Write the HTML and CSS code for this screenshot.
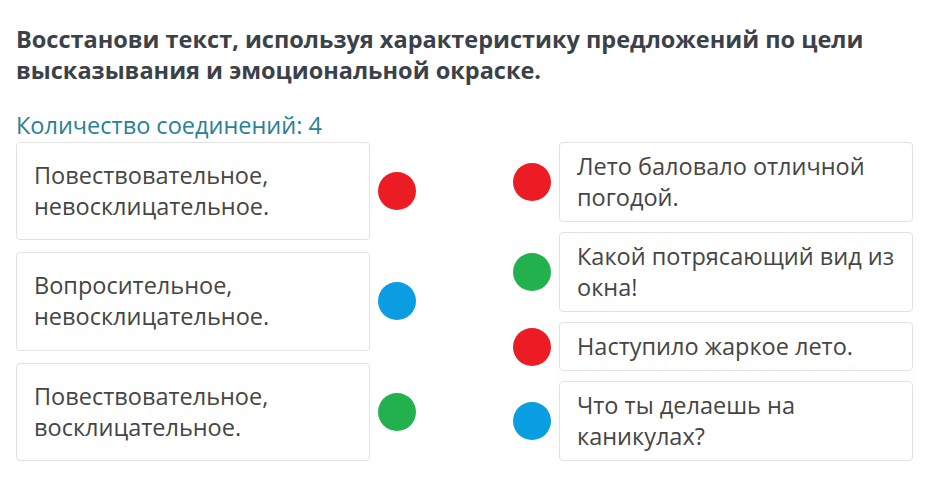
FILE: index.html
```html
<!DOCTYPE html>
<html>

<head>
  <meta charset="utf-8">
  <title>Соединения</title>
  <link rel="stylesheet" href="styles.css">
</head>

<body>
  <div id="task">
    <div class="question">Восстанови текст, используя характеристику предложений по цели высказывания и эмоциональной окраске.</div>
    <div class="count">Количество соединений: 4</div>

    <div class="board">
      <div class="col col-left">
        <div class="item">
          <div class="card">Повествовательное,<br>невосклицательное.</div>
          <span class="dot red"></span>
        </div>
        <div class="item">
          <div class="card">Вопросительное,<br>невосклицательное.</div>
          <span class="dot blue"></span>
        </div>
        <div class="item">
          <div class="card">Повествовательное,<br>восклицательное.</div>
          <span class="dot green"></span>
        </div>
      </div>

      <div class="col col-right">
        <div class="item">
          <span class="dot red"></span>
          <div class="card">Лето баловало отличной погодой.</div>
        </div>
        <div class="item">
          <span class="dot green"></span>
          <div class="card">Какой потрясающий вид из окна!</div>
        </div>
        <div class="item">
          <span class="dot red"></span>
          <div class="card">Наступило жаркое лето.</div>
        </div>
        <div class="item">
          <span class="dot blue"></span>
          <div class="card">Что ты делаешь на каникулах?</div>
        </div>
      </div>
    </div>
  </div>
</body>

</html>
```

FILE: styles.css
```css
* {
  font-family: "Open Sans", sans-serif;
  box-sizing: border-box;
}

body {
  margin: 0;
  background: #fff;
}

#task {
  padding: 24px 28px 0 16px;
}

.question {
  font-weight: bold;
  font-size: 23.5px;
  line-height: 31px;
  color: #3b4148;
}

.count {
  margin-top: 25px;
  font-size: 23.5px;
  line-height: 28px;
  color: #2b7f97;
  margin-bottom: 3px;
}

.board {
  display: flex;
  justify-content: space-between;
  align-items: stretch;
}

.col {
  display: flex;
  flex-direction: column;
}

.col-left {
  gap: 12px;
}

.col-left .item {
  flex: 1;
}

.col-right {
  gap: 10px;
}

.item {
  display: flex;
  align-items: center;
  gap: 8px;
}

.card {
  width: 354px;
  align-self: stretch;
  display: flex;
  align-items: center;
  border: 1px solid #e2e2e2;
  border-radius: 4px;
  padding: 8px 17px;
  font-size: 23.5px;
  line-height: 31px;
  color: #454545;
}

.dot {
  width: 38px;
  height: 38px;
  border-radius: 50%;
  flex-shrink: 0;
}

.red {
  background: #ec1c24;
}

.blue {
  background: #0a9de2;
}

.green {
  background: #22b14c;
}
```
